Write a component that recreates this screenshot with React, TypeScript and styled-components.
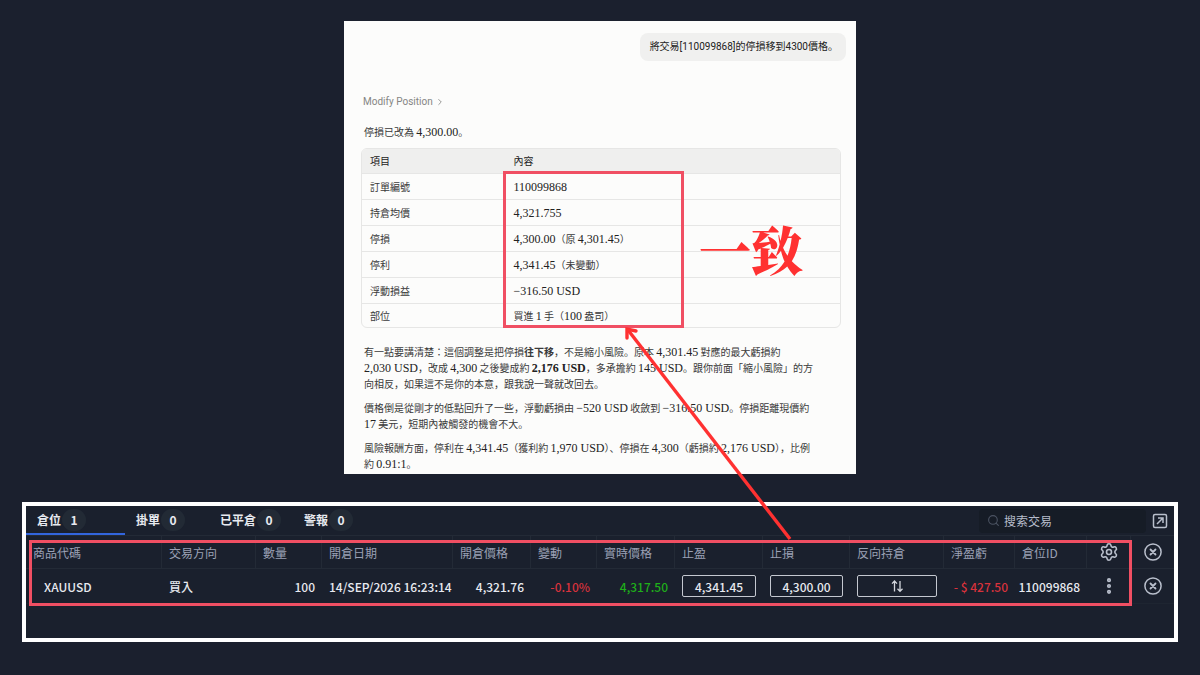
import React from "react";
import styled, { createGlobalStyle } from "styled-components";
import { ChevronRight, EllipsisVertical, Search, Settings } from "lucide-react";

const GlobalStyle = createGlobalStyle`
  *, *::before, *::after { box-sizing: border-box; }
  body {
    margin: 0;
    background: #1b202e;
    font-family: "Noto Sans CJK TC", "Noto Sans", sans-serif;
  }
`;

const highlight = "#f04f63";
const marker = "#ff3131";

const Page = styled.main`
  display: flex;
  flex-direction: column;
  align-items: center;
  gap: 28px;
  padding: 21px 22px 33px;
`;

const ChatCard = styled.section`
  position: relative;
  display: flex;
  flex-direction: column;
  width: 100%;
  max-width: 512px;
  padding: 12px 10px 2px 17px;
  background: #fcfcfb;
  color: #3a3a3a;
  font: 10px/16px "Noto Sans CJK JP", sans-serif;
`;

const Bubble = styled.p`
  align-self: flex-end;
  margin: 0;
  padding: 6px 8px 6px 10px;
  border-radius: 8px;
  background: #f0f0ef;
  color: #222;
  font-family: Roboto, "Noto Sans CJK JP", sans-serif;
`;

const ToolLink = styled.button`
  display: flex;
  align-items: center;
  align-self: flex-start;
  gap: 2px;
  margin: 33px 0 0 2px;
  padding: 0;
  border: 0;
  background: none;
  color: #858583;
  font: 10px/16px Roboto, sans-serif;
`;

const Reply = styled.p`
  margin: 0 0 8px 3px;
  white-space: nowrap;
  &:last-of-type { margin-bottom: 0; }
`;

const Lead = styled(Reply)`
  margin-top: 14px;
`;

const Latin = styled.span`
  color: #222;
  font-family: "Liberation Serif", serif;
  font-size: 12px;
`;

const SummaryFrame = styled.div`
  position: relative;
  width: 480px;
  max-width: 100%;
  margin-bottom: 16px;
  border: 1px solid #e6e6e5;
  border-radius: 6px;
`;

const Summary = styled.table`
  width: 100%;
  border-collapse: separate;
  border-spacing: 0;
  table-layout: fixed;

  th, td {
    height: 26px;
    padding: 0 8px;
    text-align: left;
    font-weight: 400;
  }
  thead th {
    height: 24px;
    background: #efefee;
    color: #222;
  }
  thead th:first-child { border-radius: 5px 0 0 0; }
  thead th:last-child { border-radius: 0 5px 0 0; }
  tbody th, tbody td { border-top: 1px solid #e6e6e5; }
  tbody tr:last-child > * { height: 24px; }
`;

const SummaryOutline = styled.div`
  position: absolute;
  top: 22px;
  left: 141px;
  width: 181px;
  height: 157px;
  border: 3px solid ${highlight};
`;

const MatchNote = styled.strong`
  position: absolute;
  top: 68px;
  left: 337px;
  color: ${marker};
  font: 900 52px/64px "Noto Serif CJK TC", "Noto Sans CJK TC", serif;
`;

const Arrow = styled.svg`
  position: absolute;
  z-index: 1;
  top: 303px;
  left: 278px;
  pointer-events: none;
`;

const Panel = styled.section`
  position: relative;
  width: 100%;
  min-height: 140px;
  border: 4px solid #fff;
  background: #1a202d;
  color: #e8eaf0;
  font-size: 12px;
`;

const Toolbar = styled.div`
  display: flex;
  align-items: center;
  height: 30px;
  padding-right: 6px;
  border-bottom: 1px solid #232a36;
`;

const Tabs = styled.div`
  display: flex;
  flex: 1;
  height: 100%;
`;

const Tab = styled.button<{ $active?: boolean }>`
  display: flex;
  align-items: center;
  gap: 1px;
  min-width: ${(p) => (p.$active ? 99 : 84)}px;
  padding: 0 0 0 11px;
  border: 0;
  border-bottom: 2px solid ${(p) => (p.$active ? "#3265dd" : "transparent")};
  background: none;
  color: #e8eaf0;
  font: 700 12px/16px "Noto Sans CJK TC", sans-serif;
`;

const Count = styled.span`
  width: 24px;
  border-radius: 11px;
  background: #222a35;
  line-height: 22px;
  text-align: center;
`;

const SearchBox = styled.label`
  display: flex;
  align-items: center;
  gap: 4px;
  width: 167px;
  height: 24px;
  margin-right: 6px;
  padding: 0 8px;
  border-radius: 4px;
  background: #161c26;
  color: #4b5362;
`;

const SearchInput = styled.input`
  flex: 1;
  min-width: 0;
  padding: 0;
  border: 0;
  background: none;
  color: #b6bccb;
  font: 12px/16px "Noto Sans CJK TC", sans-serif;
  &::placeholder { color: #b6bccb; opacity: 1; }
`;

const IconButton = styled.button`
  display: flex;
  align-items: center;
  justify-content: center;
  margin: 0 auto;
  padding: 0;
  border: 0;
  background: none;
  color: #b9bfcc;
`;

const Positions = styled.table`
  width: 100%;
  border-collapse: separate;
  border-spacing: 0;
  table-layout: fixed;
  white-space: nowrap;
`;

const Head = styled.th`
  height: 33px;
  padding: 0 0 0 7px;
  border-right: 1px solid #232a36;
  border-bottom: 1px solid #232a36;
  color: #9aa1b5;
  font-weight: 400;
  text-align: left;
  &:last-child { border-right: 0; }
`;

const HeadIcon = styled(Head)`
  padding: 0;
`;

const Cell = styled.td<{ $end?: boolean; $inset?: number; $color?: string }>`
  height: 35px;
  padding: 0 7px 0 ${(p) => p.$inset ?? (p.$end ? 0 : 7)}px;
  border-bottom: 1px solid #1e2531;
  color: ${(p) => p.$color ?? "#e8eaf0"};
  font-weight: 500;
  text-align: ${(p) => (p.$end ? "right" : "left")};
`;

const IconCell = styled(Cell)`
  padding: 0;
`;

const PriceInput = styled.input`
  display: block;
  width: 100%;
  height: 22px;
  padding: 0;
  border: 1px solid #c4c8d0;
  border-radius: 2px;
  background: none;
  color: #e8eaf0;
  font: 500 12px/20px "Noto Sans CJK TC", sans-serif;
  text-align: center;
`;

const ReverseButton = styled.button`
  display: flex;
  align-items: center;
  justify-content: center;
  width: 100%;
  height: 22px;
  padding: 0;
  border: 1px solid #c4c8d0;
  border-radius: 2px;
  background: none;
  color: #d4d7de;
`;

const PanelOutline = styled.div`
  position: absolute;
  top: 34px;
  left: 3px;
  right: 42px;
  height: 66px;
  border: 3px solid ${highlight};
  pointer-events: none;
`;

const latinRun = /([A-Za-z0-9−][A-Za-z0-9−.,: ]*[A-Za-z0-9]|[0-9])/;

function Mixed({ text }: { text: string }) {
  return (
    <>
      {text.split(latinRun).map((part, i) => (i % 2 ? <Latin key={i}>{part}</Latin> : part))}
    </>
  );
}

function CloseIcon() {
  return (
    <svg width="18" height="18" viewBox="0 0 18 18" fill="none" stroke="currentColor" strokeWidth="1.5" strokeLinecap="round">
      <circle cx="9" cy="9" r="8.1" />
      <path d="M6.5 6.5l5 5M11.5 6.5l-5 5" strokeWidth="1.8" />
    </svg>
  );
}

const summaryRows = [
  ["訂單編號", "110099868"],
  ["持倉均價", "4,321.755"],
  ["停損", "4,300.00（原 4,301.45）"],
  ["停利", "4,341.45（未變動）"],
  ["浮動損益", "−316.50 USD"],
  ["部位", "買進 1 手（100 盎司）"],
];

const tabs: [string, number][] = [["倉位", 1], ["掛單", 0], ["已平倉", 0], ["警報", 0]];
const columns = [136, 94, 66, 131, 78, 66, 78, 88, 87, 94, 71, 72, 44, 43];
const headings = ["商品代碼", "交易方向", "數量", "開倉日期", "開倉價格", "變動", "實時價格", "止盈", "止損", "反向持倉", "淨盈虧", "倉位ID"];

export default function App() {
  return (
    <Page>
      <GlobalStyle />
      <ChatCard>
        <Bubble>將交易[110099868]的停損移到4300價格。</Bubble>
        <ToolLink type="button">
          Modify Position <ChevronRight size={10} />
        </ToolLink>
        <Lead><Mixed text="停損已改為 4,300.00。" /></Lead>
        <SummaryFrame>
          <Summary>
            <colgroup>
              <col style={{ width: "30%" }} />
              <col />
            </colgroup>
            <thead>
              <tr><th scope="col">項目</th><th scope="col">內容</th></tr>
            </thead>
            <tbody>
              {summaryRows.map(([name, value]) => (
                <tr key={name}>
                  <th scope="row">{name}</th>
                  <td><Mixed text={value} /></td>
                </tr>
              ))}
            </tbody>
          </Summary>
          <SummaryOutline />
          <MatchNote>一致</MatchNote>
        </SummaryFrame>
        <Reply>
          有一點要講清楚：這個調整是把停損<b>往下移</b>，不是縮小風險。<Mixed text="原本 4,301.45 對應的最大虧損約" /><br />
          <Mixed text="2,030 USD，改成 4,300 之後變成約 " /><b><Mixed text="2,176 USD" /></b>
          <Mixed text="，多承擔約 145 USD。跟你前面「縮小風險」的方" /><br />
          向相反，如果這不是你的本意，跟我說一聲就改回去。
        </Reply>
        <Reply>
          <Mixed text="價格倒是從剛才的低點回升了一些，浮動虧損由 −520 USD 收斂到 −316.50 USD。停損距離現價約" /><br />
          <Mixed text="17 美元，短期內被觸發的機會不大。" />
        </Reply>
        <Reply>
          <Mixed text="風險報酬方面，停利在 4,341.45（獲利約 1,970 USD）、停損在 4,300（虧損約 2,176 USD），比例" /><br />
          <Mixed text="約 0.91:1。" />
        </Reply>
        <Arrow width="176" height="220" viewBox="0 0 176 220" fill="none" stroke={marker} strokeWidth="3.4">
          <path d="M168 215L6 6" />
          <path d="M5 14L5 5L14 7" strokeLinecap="round" />
        </Arrow>
      </ChatCard>

      <Panel>
        <Toolbar>
          <Tabs>
            {tabs.map(([label, count], i) => (
              <Tab key={label} type="button" $active={i === 0}>
                {label}<Count>{count}</Count>
              </Tab>
            ))}
          </Tabs>
          <SearchBox>
            <Search size={13} />
            <SearchInput type="search" placeholder="搜索交易" aria-label="搜索交易" />
          </SearchBox>
          <div>
            <IconButton type="button" aria-label="Open in window">
              <svg width="16" height="16" viewBox="0 0 16 16" fill="none" stroke="currentColor" strokeWidth="1.5">
                <rect x="1.5" y="1.5" width="13" height="13" rx="1.5" />
                <path d="M5 11L10.7 5.3M6 5h5v5" />
              </svg>
            </IconButton>
          </div>
        </Toolbar>
        <Positions>
          <colgroup>
            {columns.map((width, i) => <col key={i} style={{ width }} />)}
          </colgroup>
          <thead>
            <tr>
              {headings.map((label) => <Head key={label} scope="col">{label}</Head>)}
              <HeadIcon><IconButton type="button" aria-label="Settings"><Settings size={20} strokeWidth={1.9} /></IconButton></HeadIcon>
              <HeadIcon><IconButton type="button" aria-label="Close all"><CloseIcon /></IconButton></HeadIcon>
            </tr>
          </thead>
          <tbody>
            <tr>
              <Cell $inset={18}>XAUUSD</Cell>
              <Cell>買入</Cell>
              <Cell $end>100</Cell>
              <Cell>14/SEP/2026 16:23:14</Cell>
              <Cell $end>4,321.76</Cell>
              <Cell $end $color="#d8323c">-0.10%</Cell>
              <Cell $end $color="#1fae1a">4,317.50</Cell>
              <Cell><PriceInput defaultValue="4,341.45" aria-label="止盈" /></Cell>
              <Cell><PriceInput defaultValue="4,300.00" aria-label="止損" /></Cell>
              <Cell>
                <ReverseButton type="button" aria-label="反向持倉">
                  <svg width="14" height="14" viewBox="0 0 14 14" fill="none" stroke="currentColor" strokeWidth="1.3">
                    <path d="M4.5 12.5V2M2 4.6L4.5 2L7 4.6M10 2v10.4M7.5 9.8L10 12.4l2.5-2.6" />
                  </svg>
                </ReverseButton>
              </Cell>
              <Cell $end $color="#d8323c">- $ 427.50</Cell>
              <Cell $end>110099868</Cell>
              <IconCell><IconButton type="button" aria-label="More"><EllipsisVertical size={20} strokeWidth={3} /></IconButton></IconCell>
              <IconCell><IconButton type="button" aria-label="Close position"><CloseIcon /></IconButton></IconCell>
            </tr>
          </tbody>
        </Positions>
        <PanelOutline />
      </Panel>
    </Page>
  );
}
